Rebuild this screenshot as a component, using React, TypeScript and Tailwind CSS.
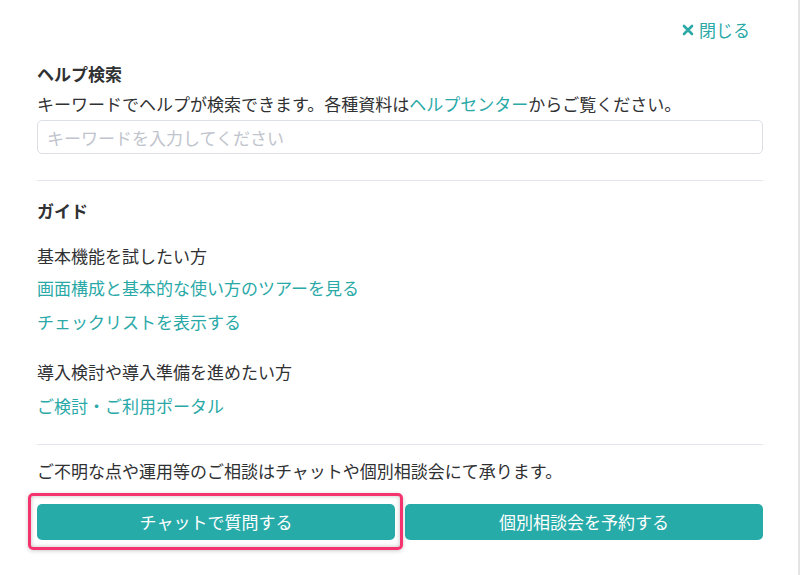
import { useState } from "react";

const font = { fontFamily: '"Noto Sans CJK JP", "Noto Sans", sans-serif' };

function CloseIcon() {
  return (
    <svg viewBox="0 0 12 12" className="h-[12px] w-[12px]" aria-hidden="true">
      <path d="M2 2 L10 10 M10 2 L2 10" stroke="currentColor" strokeWidth="2.6" strokeLinecap="round" />
    </svg>
  );
}

export default function App() {
  const [keyword, setKeyword] = useState("");

  return (
    <div className="h-[575px] w-[800px] overflow-hidden bg-white border-r-2 border-[#e4e4e4] text-[#303133]" style={font}>
      <div className="pl-[37px] pr-[35px]">
        <div className="flex justify-end pt-[18px] pr-[13px]">
          <button className="flex items-center gap-[5px] text-[17px] leading-[24px] text-[#2aa9a7]">
            <CloseIcon />
            閉じる
          </button>
        </div>

        <h2 className="mt-[20px] text-[17px] font-bold leading-[24px]">ヘルプ検索</h2>
        <p className="mt-[6px] text-[17px] leading-[24px]">
          キーワードでヘルプが検索できます。各種資料は
          <a className="text-[#2aa9a7]">ヘルプセンター</a>
          からご覧ください。
        </p>
        <input
          value={keyword}
          onChange={(e) => setKeyword(e.target.value)}
          placeholder="キーワードを入力してください"
          className="mt-[4px] h-[34px] w-full rounded-[5px] border border-[#dcdfe6] px-[9px] text-[17px] outline-none placeholder:text-[#c0c4cc]"
        />

        <div className="mt-[26px] h-px bg-[#e4e7ed]" />

        <h2 className="mt-[18px] text-[17px] font-bold leading-[24px]">ガイド</h2>
        <p className="mt-[21px] text-[17px] leading-[24px]">基本機能を試したい方</p>
        <a className="mt-[8px] block text-[17px] leading-[24px] text-[#2aa9a7]">画面構成と基本的な使い方のツアーを見る</a>
        <a className="mt-[10px] block text-[17px] leading-[24px] text-[#2aa9a7]">チェックリストを表示する</a>

        <p className="mt-[26px] text-[17px] leading-[24px]">導入検討や導入準備を進めたい方</p>
        <a className="mt-[10px] block text-[17px] leading-[24px] text-[#2aa9a7]">ご検討・ご利用ポータル</a>

        <div className="mt-[26px] h-px bg-[#e4e7ed]" />

        <p className="mt-[14px] text-[17px] leading-[24px]">ご不明な点や運用等のご相談はチャットや個別相談会にて承ります。</p>
        <div className="mt-[21px] flex gap-[10px]">
          <div className="relative flex-1">
            <button className="h-[36px] w-full rounded-[5px] bg-[#27aba9] text-[17px] text-white">チャットで質問する</button>
            <div className="pointer-events-none absolute -top-[11px] -bottom-[10px] -left-[9px] -right-[8px] rounded-[5px] border-[3px] border-[#f5336f] shadow-[inset_0_0_4px_rgba(0,0,0,0.25),0_1px_4px_rgba(0,0,0,0.2)]" />
          </div>
          <button className="h-[36px] flex-1 rounded-[5px] bg-[#27aba9] text-[17px] text-white">個別相談会を予約する</button>
        </div>
      </div>
    </div>
  );
}
